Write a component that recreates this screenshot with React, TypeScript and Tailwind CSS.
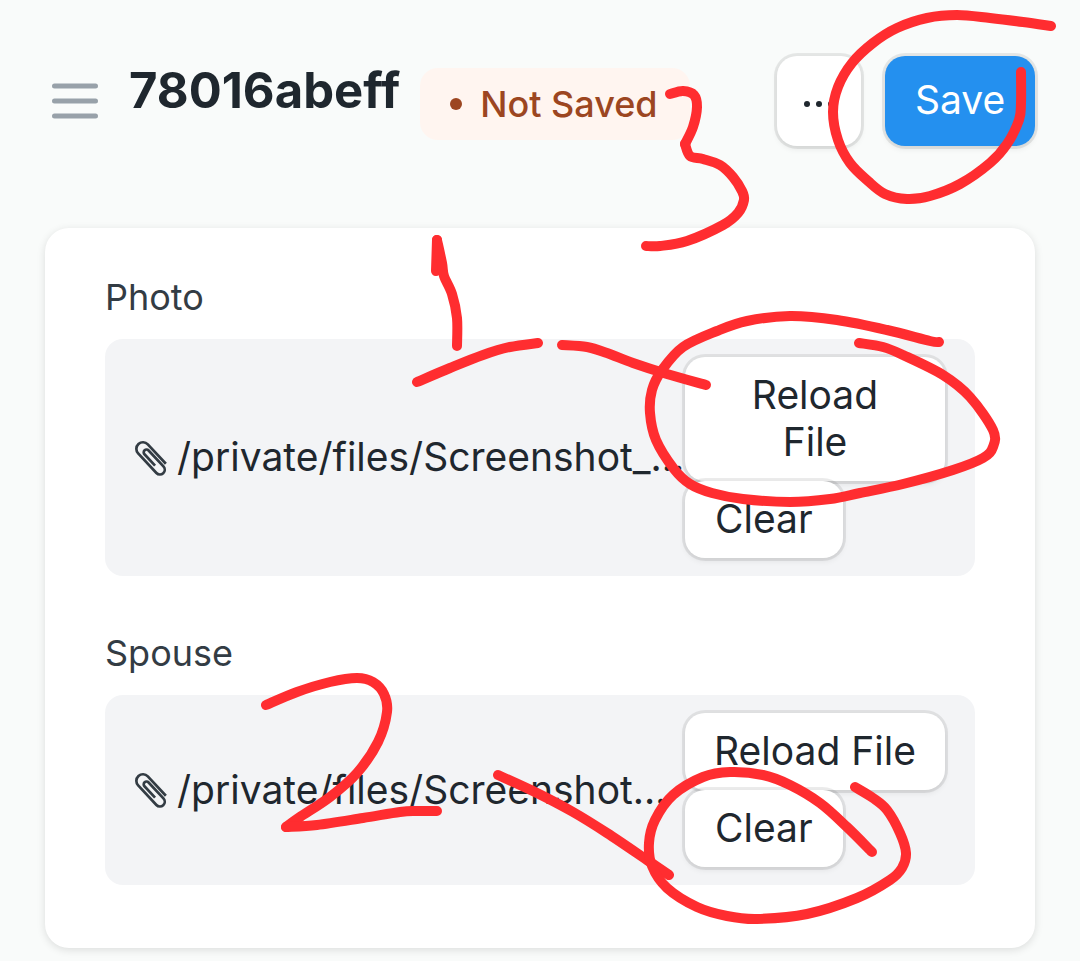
import React from "react";

type Point = [number, number];

const STROKES: Point[][] = [
  // loop around Save
  [[1051, 26], [1023, 22], [990, 18], [957, 15], [927, 18], [897, 28], [873, 43], [852, 63], [838, 87], [833, 112], [838, 140], [850, 163], [868, 181], [885, 194], [907, 199], [930, 196], [960, 184], [990, 163], [1007, 144], [1019, 120], [1021, 103], [1021, 72]],
  // 3
  [[670, 94], [683, 91], [694, 95], [697, 107], [693, 127], [685, 144]],
  [[685, 144], [690, 156], [703, 159], [720, 165], [733, 177], [742, 191], [744, 200], [738, 213], [723, 225], [687, 241], [660, 246], [646, 246]],
  // 1
  [[436, 271], [437, 240]],
  [[437, 240], [442, 263], [444, 276], [452, 294], [457, 318], [457, 346]],
  [[417, 382], [450, 368], [483, 355], [510, 347], [538, 343]],
  [[562, 345], [587, 347], [607, 353], [633, 363], [667, 374], [706, 385]],
  // loop around the first Reload File
  [[939, 342], [930, 341], [887, 330], [837, 320], [790, 316], [747, 321], [717, 331], [683, 347], [662, 370], [652, 390], [650, 413], [656, 440], [674, 469], [690, 484], [712, 493], [743, 499], [790, 502], [830, 499], [860, 493], [903, 484], [953, 470], [983, 458], [993, 447], [993, 430], [970, 397], [943, 375], [903, 355], [883, 347], [859, 343]],
  // 2
  [[266, 705], [297, 692], [330, 682], [357, 678], [373, 682], [384, 694], [387, 712], [378, 742], [357, 773], [330, 797], [300, 817], [286, 827]],
  [[286, 827], [317, 825], [363, 818], [400, 812], [417, 811], [437, 811]],
  [[498, 775], [537, 793], [573, 812], [607, 833], [647, 860], [669, 875]],
  // loop around the second Clear
  [[872, 852], [847, 827], [820, 803], [790, 785], [763, 775], [730, 772], [703, 777], [673, 795], [655, 820], [649, 843], [652, 866], [667, 888], [697, 907], [727, 916], [757, 919], [807, 914], [857, 898], [890, 880], [902, 868], [906, 853], [900, 833], [887, 810], [873, 798], [855, 787]],
];

function smooth(pts: Point[]): string {
  let d = `M${pts[0][0]} ${pts[0][1]}`;
  for (let i = 0; i < pts.length - 1; i++) {
    const a = pts[i - 1] ?? pts[i];
    const b = pts[i];
    const c = pts[i + 1];
    const e = pts[i + 2] ?? c;
    d += `C${b[0] + (c[0] - a[0]) / 6} ${b[1] + (c[1] - a[1]) / 6} ${c[0] - (e[0] - b[0]) / 6} ${c[1] - (e[1] - b[1]) / 6} ${c[0]} ${c[1]}`;
  }
  return d;
}

function Annotations() {
  return (
    <svg
      className="pointer-events-none absolute top-0 left-0"
      width="1080"
      height="961"
      viewBox="0 0 1080 961"
      fill="none"
      stroke="#ff2d30"
      strokeWidth="10"
      strokeLinecap="round"
      strokeLinejoin="round"
      aria-hidden="true"
    >
      {STROKES.map((s, i) => (
        <path key={i} d={smooth(s)} />
      ))}
    </svg>
  );
}

function Paperclip() {
  return (
    <svg width="33" height="36" viewBox="-16.5 -18 33 36" fill="none" stroke="#333c44" strokeWidth="2.7" strokeLinecap="butt" className="shrink-0" aria-hidden="true">
      <path
        transform="rotate(47)"
        d="M14 -6.6H-12.5A6.6 6.6 0 0 0 -12.5 6.6H14.3A4.8 4.8 0 0 0 14.3 -3H-7.5A2.8 2.8 0 0 0 -7.5 2.6H8"
      />
    </svg>
  );
}

const raised =
  "rounded-[20px] bg-white text-[39px] leading-[47px] text-[#1f272e] shadow-[0_0_0_3px_rgba(0,0,0,0.08),0_3px_6px_rgba(0,0,0,0.08)]";

function AttachField({ label, file, wrap }: { label: string; file: string; wrap?: boolean }) {
  return (
    <section>
      <h2 className="text-[36px] leading-[48px] text-[#333c44]">{label}</h2>
      <div className="mt-[18px] flex items-center rounded-[18px] bg-[#f3f4f6] px-[30px] py-[18px]">
        <div className="flex min-w-0 flex-1 items-center gap-[9px]">
          <Paperclip />
          <a href="#file" className="pb-0.5 text-[39px] leading-[47px] whitespace-nowrap text-[#1f272e]">
            {file}
          </a>
        </div>
        <div className="flex w-[260px] shrink-0 flex-col items-start">
          <button type="button" className={`${raised} w-full pt-[14px] pb-4 ${wrap ? "px-[60px]" : "whitespace-nowrap"}`}>
            Reload File
          </button>
          <button type="button" className={`${raised} px-[30px] pt-[14px] pb-4`}>
            Clear
          </button>
        </div>
      </div>
    </section>
  );
}

export default function App() {
  return (
    <div className="relative min-h-screen overflow-x-hidden bg-[#f9fbfa] px-[45px] pb-3 font-['Inter',sans-serif]">
      <header className="flex items-start justify-between pt-14">
        <div className="flex items-start">
          <button type="button" aria-label="Toggle sidebar" className="flex h-[90px] w-[60px] items-center justify-center">
            <svg width="46" height="36" viewBox="0 0 46 36" stroke="#98a1a9" strokeWidth="5" strokeLinecap="round" aria-hidden="true">
              <path d="M2.5 3H43.5M2.5 18H43.5M2.5 33H43.5" />
            </svg>
          </button>
          <h1 className="ml-6 text-[49px] leading-[70px] font-bold text-[#1f272e]">78016abeff</h1>
          <span className="mt-3 ml-5 flex h-[72px] min-w-[270px] items-center gap-[18px] rounded-[18px] bg-[#fff5f0] px-[30px] text-[36px] leading-[48px] font-medium whitespace-nowrap text-[#9c4621]">
            <span className="size-3 rounded-full bg-[#9c4621]" />
            Not Saved
          </span>
        </div>
        <div className="flex gap-6">
          <button type="button" aria-label="More options" className={`${raised} flex h-[90px] w-[84px] items-center justify-center`}>
            <svg width="30" height="12" viewBox="0 0 30 12" fill="#1f272e" aria-hidden="true">
              <circle cx="3" cy="9" r="3" />
              <circle cx="15" cy="9" r="3" />
              <circle cx="27" cy="9" r="3" />
            </svg>
          </button>
          <button
            type="button"
            className="h-[90px] w-[150px] rounded-[20px] bg-[#2490ef] pb-[3px] text-[39px] leading-[47px] text-white shadow-[0_0_0_3px_rgba(0,0,0,0.08),0_3px_6px_rgba(0,0,0,0.08)]"
          >
            Save
          </button>
        </div>
      </header>

      <main className="mt-[82px] flex flex-col gap-[53px] rounded-[24px] bg-white px-[60px] pt-[45px] pb-[63px] shadow-[0_2px_9px_rgba(0,0,0,0.12)]">
        <AttachField label="Photo" file="/private/files/Screenshot_…" wrap />
        <AttachField label="Spouse" file="/private/files/Screenshot…" />
      </main>

      <Annotations />
    </div>
  );
}
